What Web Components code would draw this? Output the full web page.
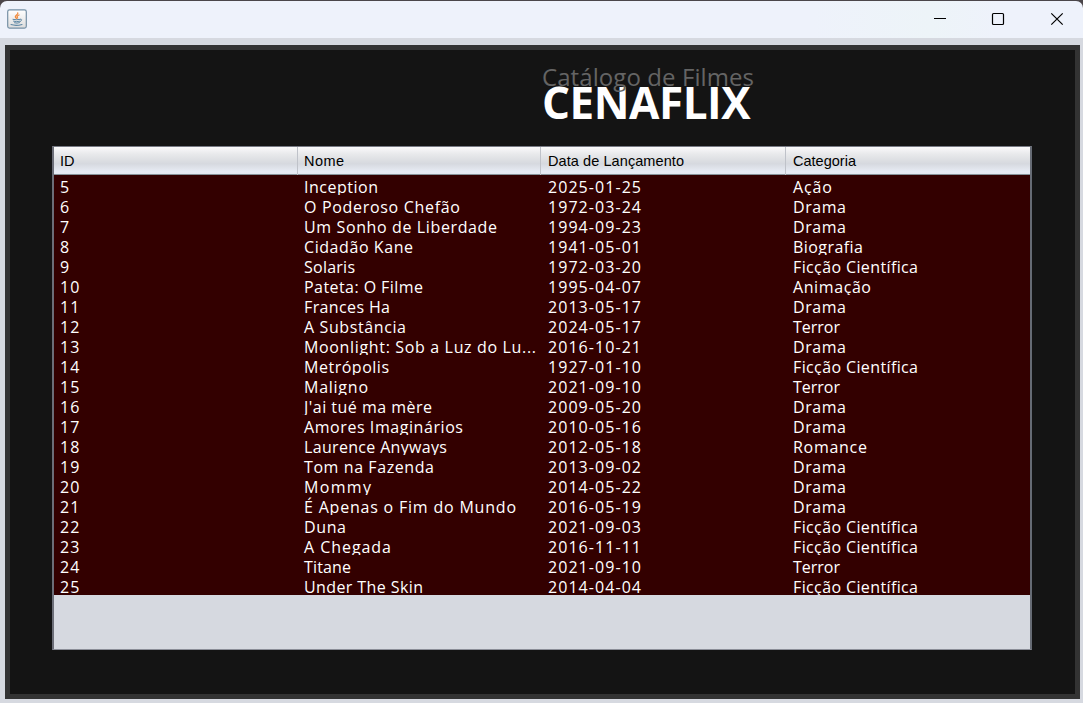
<!DOCTYPE html>
<html lang="pt-BR">
<head>
<meta charset="utf-8">
<title>Cenaflix</title>
<style>
html,body{margin:0;height:100%;overflow:hidden;background:#4b464a}
</style>
</head>
<body>
<app-window>
  <title-bar slot="title"></title-bar>
  <catalog-panel>
    <catalog-heading slot="heading"></catalog-heading>
    <film-table></film-table>
  </catalog-panel>
</app-window>
<script>
class Base extends HTMLElement{
  constructor(){super();this.attachShadow({mode:'open'}).innerHTML=this.view();}
}
/* Text whose letter spacing is adjusted so that it spans the "w" attribute in pixels. */
customElements.define('fit-text',class extends Base{
  view(){return `<style>:host{display:block;white-space:pre}span{display:inline-block}</style><span><slot></slot></span>`}
  connectedCallback(){
    const s=this.shadowRoot.querySelector('span'),n=[...this.textContent].length,w=+this.getAttribute('w');
    if(w&&n>1)s.style.letterSpacing=((w-s.getBoundingClientRect().width)/(n-1)).toFixed(3)+'px';
  }
});
customElements.define('app-window',class extends Base{
  view(){return `<style>
  :host{display:flex;flex-direction:column;box-sizing:border-box;width:1083px;height:703px;padding-top:1px}
  main{flex:1;display:flex;box-sizing:border-box;padding:7px 3px 4px 5px;background:#d6d9e0}
  ::slotted(catalog-panel){flex:1}
  </style><slot name="title"></slot><main><slot></slot></main>`}
});
customElements.define('title-bar',class extends Base{
  view(){return `<style>
  :host{display:flex;align-items:center;height:37px;box-sizing:border-box;padding-left:7px;background:linear-gradient(90deg,#eef2fb,#eef2fb 75%,#edf4f8 86%,#eef2fb 92%);border-radius:7px 7px 0 0}
  svg{display:block;flex:none}
  .app{margin-bottom:2px}
  .ctl{display:flex;margin-left:auto}
  </style>
  <svg class="app" width="20" height="20" viewBox="0 0 20 20"><defs><linearGradient id="g" x2="0" y2="1"><stop stop-color="#fff"/><stop offset="1" stop-color="#dcdcdc"/></linearGradient></defs>
  <rect x=".7" y=".9" width="18.6" height="18.2" rx="1.8" fill="url(#g)" stroke="#7590a5" stroke-width="1.2"/>
  <g fill="none" stroke-linecap="round"><path d="M10.800 3.900C11.500 5.600 7.500 6.400 8.400 8.200L9.600 9.600M12 6C9.500 7 10 8 10.700 9" stroke="#f08a3c" stroke-width="1.3"/>
  <path d="M6 10.400Q9.500 11.200 13 10.400M6.500 12.200Q9.500 13.200 13 12.200M7.500 13.800Q10 14.600 12.500 13.700M13.500 10.200Q16.200 10 13.500 12.500" stroke="#5f88a5" stroke-width="1"/><path d="M4 15.600Q9 17.200 15 15.500" stroke="#5f88a5" stroke-width="1.1"/></g></svg>
  <div class="ctl">
  <svg width="58" height="37" viewBox="911 1 58 37"><path d="M934 18.500h12" stroke="#000"/></svg>
  <svg width="58" height="37" viewBox="969 1 58 37"><rect x="992.500" y="13.500" width="11" height="11" rx="1" fill="none" stroke="#000" stroke-width="1.2"/></svg>
  <svg width="56" height="37" viewBox="1027 1 56 37"><path d="M1051.300 13.300l11.400 11.400M1062.700 13.300l-11.400 11.400" stroke="#000" stroke-width="1.2"/></svg></div>`}
});
customElements.define('catalog-panel',class extends Base{
  view(){return `<style>
  :host{display:flex;flex-direction:column;box-sizing:border-box;border:5px solid #333;background:#141414;padding:0 0 0 42px}
  header{height:96px;padding-left:490px}
  </style><header><slot name="heading"></slot></header><slot></slot>`}
});
customElements.define('catalog-heading',class extends Base{
  view(){return `<style>
  :host{display:flex;flex-direction:column;padding-top:14px;font-family:"Open Sans","Noto Sans",sans-serif}
  .a{font-size:24px;line-height:26px;height:17px;color:#646464;position:relative;z-index:1}
  .b{font-size:44px;line-height:43px;font-weight:700;color:#fff}
  </style><fit-text class="a" w="212">Catálogo de Filmes</fit-text><fit-text class="b" w="208.5">CENAFLIX</fit-text>`}
});
const FILMS=[
[5,'Inception',378,'2025-01-25','Ação'],[6,'O Poderoso Chefão',460,'1972-03-24','Drama'],
[7,'Um Sonho de Liberdade',497,'1994-09-23','Drama'],[8,'Cidadão Kane',413,'1941-05-01','Biografia'],
[9,'Solaris',355,'1972-03-20','Ficção Científica'],[10,'Pateta: O Filme',423,'1995-04-07','Animação'],
[11,'Frances Ha',390,'2013-05-17','Drama'],[12,'A Substância',406,'2024-05-17','Terror'],
[13,'Moonlight: Sob a Luz do Lu...',536,'2016-10-21','Drama'],[14,'Metrópolis',389,'1927-01-10','Ficção Científica'],
[15,'Maligno',368,'2021-09-10','Terror'],[16,"J'ai tué ma mère",432,'2009-05-20','Drama'],
[17,'Amores Imaginários',463,'2010-05-16','Drama'],[18,'Laurence Anyways',447,'2012-05-18','Romance'],
[19,'Tom na Fazenda',434,'2013-09-02','Drama'],[20,'Mommy',371,'2014-05-22','Drama'],
[21,'É Apenas o Fim do Mundo',516,'2016-05-19','Drama'],[22,'Duna',346,'2021-09-03','Ficção Científica'],
[23,'A Chegada',391,'2016-11-11','Ficção Científica'],[24,'Titane',351,'2021-09-10','Terror'],
[25,'Under The Skin',423,'2014-04-04','Ficção Científica']];
const CAT={'Ação':39,'Drama':53,'Biografia':70,'Ficção Científica':125,'Animação':78,'Terror':47,'Romance':74};
customElements.define('film-row',class extends Base{
  view(){return `<style>
  :host{display:grid;grid-template-columns:244px 244px 245px 1fr;height:20px;overflow:hidden;background:#300;color:#fff;font:16px/24px "Open Sans","Noto Sans",sans-serif}
  ::slotted(*){padding-left:5px;height:20px}
  </style><slot></slot>`}
});
customElements.define('film-table',class extends Base{
  view(){return `<style>
  :host{display:flex;flex-direction:column;box-sizing:border-box;width:980px;height:504px;border:1px solid #8b8e98;border-width:1px 2px 1px 2px;border-color:#777a84 #666b74 #8b8e98 #6c6e78;background:#d6d9e0}
  .head{display:grid;grid-template-columns:244px 243px 245px 1fr;height:28px;box-sizing:border-box;border-bottom:1px solid #87939a;font:14.5px/28px "Liberation Sans",Arial,sans-serif;color:#000;background:linear-gradient(#fafafb,#e9eaec 25%,#dcdee2 50%,#d6d9df 62%,#e8ecf5 92%,#e4e8f1)}
  .head fit-text{padding-left:6px;box-sizing:border-box;border-right:1px solid #bfc2c9}
  .head fit-text:nth-child(n+3){padding-left:7px}
  .head fit-text:last-child{border-right:0}
  film-row{padding-left:1px}
  </style>
  <div class="head"><fit-text w="14.5">ID</fit-text><fit-text w="40">Nome</fit-text><fit-text w="136">Data de Lançamento</fit-text><fit-text w="63">Categoria</fit-text></div>
  ${FILMS.map(([id,n,r,d,c])=>`<film-row><fit-text w="${id>9?19.5:10}">${id}</fit-text><fit-text w="${r-304}">${n}</fit-text><fit-text w="93">${d}</fit-text><fit-text w="${CAT[c]}">${c}</fit-text></film-row>`).join('')}`}
});
</script>
</body>
</html>
